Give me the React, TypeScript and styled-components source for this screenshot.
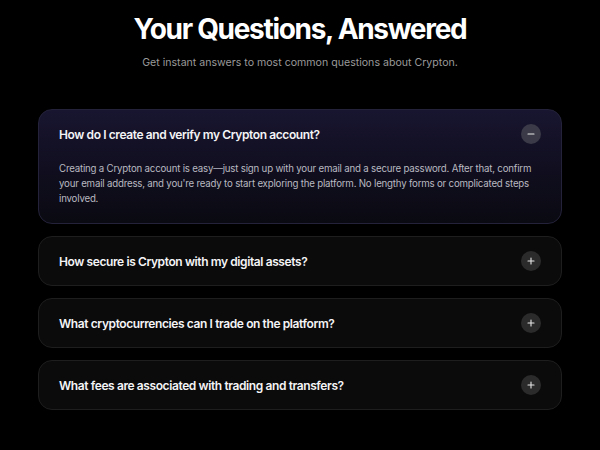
import React, { useState } from 'react';
import styled, { createGlobalStyle } from 'styled-components';

const GlobalStyle = createGlobalStyle`
  html, body {
    margin: 0;
    padding: 0;
    background: #000;
    font-family: Inter, "Liberation Sans", sans-serif;
    -webkit-font-smoothing: antialiased;
  }
`;

const Section = styled.section`
  width: 600px;
  height: 450px;
  overflow: hidden;
  box-sizing: border-box;
  padding: 10px 38px 0 38px;
  background: #000;
`;

const Header = styled.header`
  display: flex;
  flex-direction: column;
  align-items: center;
  margin-bottom: 38px;
`;

const Title = styled.h1`
  margin: 0;
  color: #fff;
  font-size: 28px;
  font-weight: 700;
  letter-spacing: -1.3px;
  line-height: 38px;
`;

const Subtitle = styled.p`
  margin: 7px 0 0;
  color: #9a9a9a;
  font-size: 10.6px;
  line-height: 16px;
`;

const List = styled.div`
  display: flex;
  flex-direction: column;
  gap: 12px;
`;

const Card = styled.div<{ $open: boolean }>`
  border: 1px solid ${(p) => (p.$open ? '#24223a' : '#1e1e1e')};
  border-radius: 14px;
  background: ${(p) =>
    p.$open
      ? 'linear-gradient(180deg, #181530 0%, #100e1e 55%, #0a0a12 100%)'
      : '#0b0b0b'};
  overflow: hidden;
`;

const QuestionRow = styled.button`
  display: flex;
  align-items: center;
  justify-content: space-between;
  width: 100%;
  height: 48px;
  padding: 0 20px;
  background: none;
  border: none;
  cursor: pointer;
  font-family: inherit;
  text-align: left;
`;

const Question = styled.span`
  color: #f4f4f6;
  font-size: 12px;
  font-weight: 600;
  letter-spacing: -0.4px;
`;

const Toggle = styled.span<{ $open: boolean }>`
  display: flex;
  align-items: center;
  justify-content: center;
  width: 20px;
  height: 20px;
  border-radius: 50%;
  background: ${(p) => (p.$open ? '#3a3a48' : '#2b2b2b')};
  color: #e8e8e8;
  flex-shrink: 0;
`;

const Answer = styled.p`
  margin: 0;
  padding: 3px 10px 17px 20px;
  color: #b9b9c0;
  font-size: 9.7px;
  letter-spacing: -0.2px;
  line-height: 15px;
`;

const faqs = [
  {
    q: 'How do I create and verify my Crypton account?',
    a: "Creating a Crypton account is easy\u2014just sign up with your email and a secure password. After that, confirm your email address, and you're ready to start exploring the platform. No lengthy forms or complicated steps involved.",
  },
  {
    q: 'How secure is Crypton with my digital assets?',
    a: 'Your assets are protected with industry-grade encryption, cold storage and two-factor authentication.',
  },
  {
    q: 'What cryptocurrencies can I trade on the platform?',
    a: 'You can trade all major cryptocurrencies along with a growing list of popular altcoins.',
  },
  {
    q: 'What fees are associated with trading and transfers?',
    a: 'Fees are transparent and shown before every trade or transfer you confirm.',
  },
];

const PlusMinus = ({ open }: { open: boolean }) => (
  <svg width="8" height="8" viewBox="0 0 8 8">
    <line x1="1" y1="4" x2="7" y2="4" stroke="currentColor" strokeWidth="1.1" strokeLinecap="round" />
    {!open && <line x1="4" y1="1" x2="4" y2="7" stroke="currentColor" strokeWidth="1.1" strokeLinecap="round" />}
  </svg>
);

export default function App() {
  const [openIndex, setOpenIndex] = useState<number | null>(0);

  return (
    <>
      <GlobalStyle />
      <Section>
        <Header>
          <Title>Your Questions, Answered</Title>
          <Subtitle>Get instant answers to most common questions about Crypton.</Subtitle>
        </Header>
        <List>
          {faqs.map((item, i) => {
            const open = openIndex === i;
            return (
              <Card key={item.q} $open={open}>
                <QuestionRow onClick={() => setOpenIndex(open ? null : i)}>
                  <Question>{item.q}</Question>
                  <Toggle $open={open}>
                    <PlusMinus open={open} />
                  </Toggle>
                </QuestionRow>
                {open && <Answer>{item.a}</Answer>}
              </Card>
            );
          })}
        </List>
      </Section>
    </>
  );
}
